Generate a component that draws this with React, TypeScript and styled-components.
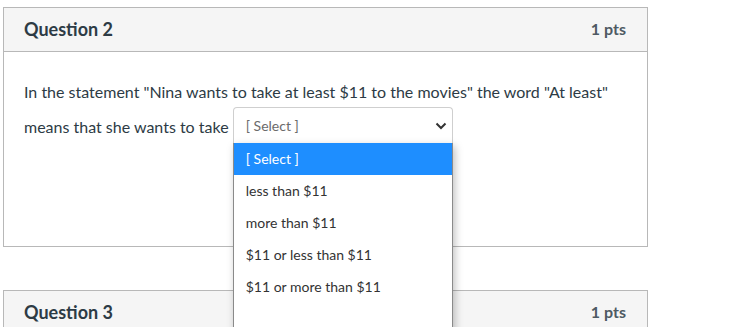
import styled, { createGlobalStyle } from 'styled-components';

const GlobalStyle = createGlobalStyle`
  body {
    margin: 0;
    background: #fff;
    font-family: Lato, 'Open Sans', sans-serif;
    color: #2d3b45;
    overflow: hidden;
  }
`;

const options = [
  '[ Select ]',
  'less than $11',
  'more than $11',
  '$11 or less than $11',
  '$11 or more than $11',
];

const App = () => {
  return (
    <Page>
      <GlobalStyle />
      <Card>
        <Header>
          <Title>Question 2</Title>
          <Points>1 pts</Points>
        </Header>
        <Body>
          <Text>
            <span>
              In the statement "Nina wants to take at least $11 to the movies"
              the word "At least"
            </span>{' '}
            <span>means that she wants to take</span>{' '}
            <SelectWrap>
              <SelectBox>
                <SelectLabel>[ Select ]</SelectLabel>
                <svg width='12' height='8' viewBox='0 0 12 8'>
                  <path
                    d='M1.5 1.5 L6 6 L10.5 1.5'
                    fill='none'
                    stroke='#333'
                    strokeWidth='2'
                  />
                </svg>
              </SelectBox>
              <Menu>
                {options.map((o, i) => (
                  <Option key={o} active={i === 0}>
                    {o}
                  </Option>
                ))}
              </Menu>
            </SelectWrap>
          </Text>
        </Body>
      </Card>
      <Card>
        <Header>
          <Title>Question 3</Title>
          <Points>1 pts</Points>
        </Header>
      </Card>
    </Page>
  );
};

const Page = styled.div`
  padding: 7px 0 0 3px;
  width: 645px;
  display: flex;
  flex-direction: column;
  gap: 43px;
`;

const Card = styled.section`
  border: 1px solid #b8b8b8;
  background: #fff;
`;

const Header = styled.header`
  height: 44px;
  display: flex;
  align-items: center;
  justify-content: space-between;
  padding: 0 21px 2px 20px;
  box-sizing: border-box;
  background: #f5f5f5;
  border-bottom: 1px solid #b8b8b8;
`;

const Title = styled.h2`
  margin: 0;
  font-size: 18px;
  font-weight: 700;
  color: #2d3b45;
`;

const Points = styled.div`
  font-size: 16px;
  font-weight: 700;
  color: #4e5a63;
`;

const Body = styled.div`
  height: 194px;
  padding: 22px 20px 0;
  box-sizing: border-box;
`;

const Text = styled.p`
  margin: 0;
  font-size: 16px;
  line-height: 35px;
  color: #2d3b45;
`;

const SelectWrap = styled.span`
  position: relative;
  display: inline-block;
  vertical-align: middle;
  margin: -15px 0 -8px;
`;

const SelectBox = styled.span`
  box-sizing: border-box;
  width: 220px;
  height: 36px;
  display: flex;
  align-items: center;
  justify-content: space-between;
  padding: 0 5px 0 12px;
  border: 1px solid #cfcfcf;
  border-bottom: none;
  border-radius: 4px 4px 0 0;
  background: #fff;
  svg {
    margin-top: 1px;
  }
`;

const SelectLabel = styled.span`
  font-size: 14px;
  line-height: 18px;
  color: #6b6b6b;
`;

const Menu = styled.span`
  position: absolute;
  left: 0;
  top: 36px;
  width: 220px;
  height: 190px;
  box-sizing: border-box;
  border: 1px solid #8a8a8a;
  border-top: none;
  background: #fff;
  box-shadow: 2px 3px 8px rgba(0, 0, 0, 0.25);
  display: flex;
  flex-direction: column;
`;

const Option = styled.span<{ active?: boolean }>`
  height: 32px;
  display: flex;
  align-items: center;
  padding-left: 12px;
  font-size: 14px;
  line-height: 18px;
  color: ${(p) => (p.active ? '#fff' : '#333')};
  background: ${(p) => (p.active ? '#1e8eff' : 'transparent')};
`;

export default App;
